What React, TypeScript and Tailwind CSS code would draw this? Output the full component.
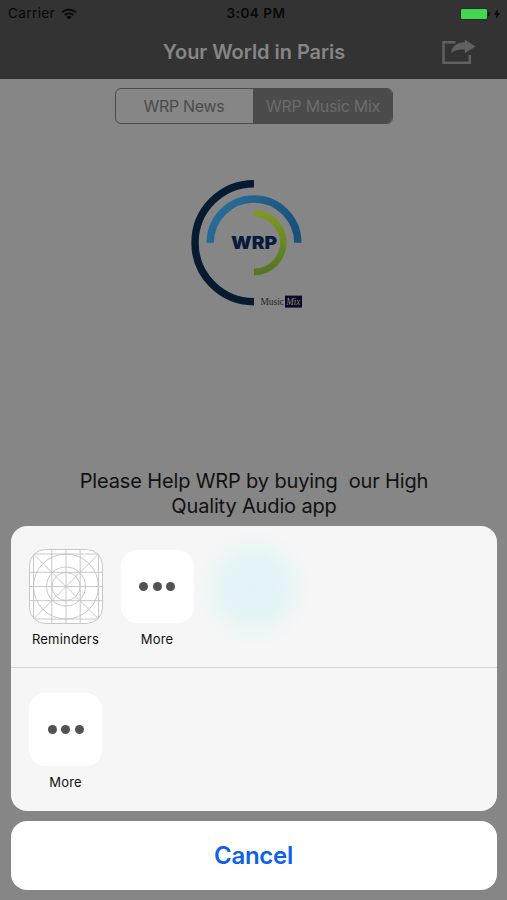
import React from "react";

const Wifi = () => (
  <svg width="16" height="12" viewBox="0 0 16 12" fill="none" stroke="#080808" strokeWidth="1.7">
    <path d="M1 4.4a10 10 0 0 1 14 0" />
    <path d="M3.6 7.1a6.3 6.3 0 0 1 8.8 0" />
    <path d="M8 11.5 5.4 8.9a3.8 3.8 0 0 1 5.2 0Z" fill="#080808" stroke="none" />
  </svg>
);

const StatusBar = () => (
  <div className="relative flex h-[27px] items-center justify-between pr-[6px] pl-[8px] text-[#080808]">
    <div className="flex items-center gap-[6px]">
      <span className="text-[13.5px] tracking-[0.4px]">Carrier</span>
      <Wifi />
    </div>
    <div className="absolute inset-x-0 pl-[5px] text-center text-[13.5px] font-semibold tracking-[0.5px]">
      3:04 PM
    </div>
    <div className="flex items-center">
      <div className="h-[12px] w-[28px] rounded-[2px] border border-[#262b27] bg-[#45d64f]" />
      <div className="h-1 w-[2px] rounded-r-sm bg-[#0c0c0c]" />
      <svg className="ml-[3px]" width="8" height="12" viewBox="0 0 8 12" fill="#080808">
        <path d="M5 .8.9 6.8h2.6L2.7 11.2 7.1 5H4.5Z" />
      </svg>
    </div>
  </div>
);

const ShareIcon = () => (
  <svg width="34" height="26" viewBox="0 0 34 26">
    <path d="M13.5 3.2H1.5v20.6h26.3V16" fill="none" stroke="#616161" strokeWidth="2.4" />
    <path d="M9 14C10.2 7.4 14.6 3.6 22.8 3.3V.4L33.6 7.5 22.8 14.3V10.6C17 10.1 13 11 9 14Z" fill="#616161" />
  </svg>
);

const Logo = () => (
  <svg width="135" height="145" viewBox="0 0 135 145">
    <defs>
      <linearGradient id="blue" x1="0" y1="0" x2="1" y2="0.4">
        <stop offset="0" stopColor="#2a729c" />
        <stop offset="1" stopColor="#19517d" />
      </linearGradient>
      <linearGradient id="green" x1="0" y1="0" x2="0" y2="1">
        <stop offset="0" stopColor="#7d9824" />
        <stop offset="1" stopColor="#567622" />
      </linearGradient>
    </defs>
    <g fill="none">
      <path d="M74 13.7a59 59 0 0 0 0 118" stroke="#061a30" strokeWidth="7.4" />
      <path d="M30.2 72.8a43.8 43.8 0 0 1 87.6 0" stroke="url(#blue)" strokeWidth="7.4" />
      <path d="M74 43.3a29.3 29.3 0 0 1 0 58.6" stroke="url(#green)" strokeWidth="6.6" />
    </g>
    <text x="51" y="79" textLength="46" lengthAdjust="spacingAndGlyphs" fontSize="17" fontWeight="900" fill="#0a1a3c">
      WRP
    </text>
    <g className="font-['Liberation_Serif',serif]" fontSize="10">
      <text x="80.5" y="135" textLength="23.5" lengthAdjust="spacingAndGlyphs" fill="#252525">
        Music
      </text>
      <rect x="105" y="125.6" width="17" height="12" fill="#090b24" />
      <text x="106.2" y="135" textLength="14" lengthAdjust="spacingAndGlyphs" fontStyle="italic" fill="#858585">
        Mix
      </text>
    </g>
  </svg>
);

// app icon construction grid
const GridIcon = () => (
  <svg width="74" height="75" viewBox="0 0 74 75" fill="none" stroke="#c2c2c2" strokeWidth="0.9">
    <defs>
      <clipPath id="tile">
        <rect x="0.5" y="0.5" width="73" height="74" rx="16" />
      </clipPath>
    </defs>
    <rect x="0.5" y="0.5" width="73" height="74" rx="16" fill="#fff" />
    <g clipPath="url(#tile)">
      <path d="M4.5 0v75M22.8 0v75M37 0v75M51.2 0v75M69.5 0v75" />
      <path d="M0 5h74M0 23.3h74M0 37.5h74M0 51.7h74M0 70h74" />
      <path d="M0 0.5 74 74.5M74 0.5 0 74.5" />
    </g>
    <circle cx="37" cy="37.5" r="32.5" />
    <circle cx="37" cy="37.5" r="19.5" />
    <circle cx="37" cy="37.5" r="14" />
  </svg>
);

const MoreIcon = () => (
  <div className="flex h-[73px] w-[73px] items-center justify-center gap-[4.5px] rounded-[16px] bg-white">
    <div className="h-[9px] w-[9px] rounded-full bg-[#525254]" />
    <div className="h-[9px] w-[9px] rounded-full bg-[#525254]" />
    <div className="h-[9px] w-[9px] rounded-full bg-[#525254]" />
  </div>
);

const ShareItem = ({ label, children }: { label: string; children: React.ReactNode }) => (
  <div className="flex w-[74px] flex-col items-center">
    <div className="flex h-[75px] items-center">{children}</div>
    <span className="mt-[6px] text-[13px] leading-[18px] tracking-[0.2px] text-[#111]">{label}</span>
  </div>
);

const App = () => {
  return (
    <div className="flex h-[900px] w-[507px] flex-col overflow-hidden bg-[#868686] font-['Inter','Liberation_Sans',sans-serif]">
      <header className="h-[79px] shrink-0 bg-[#333]">
        <StatusBar />
        <div className="grid h-[50px] grid-cols-[1fr_auto_1fr] items-center">
          <h1 className="col-start-2 pl-px text-[20px] font-semibold tracking-[-0.05px] text-[#868686]">
            Your World in Paris
          </h1>
          <div className="flex justify-end pr-[31px]">
            <ShareIcon />
          </div>
        </div>
      </header>

      <div className="mx-auto mt-[9px] flex h-[36px] w-[278px] shrink-0 overflow-hidden rounded-[6px] border border-[#4b4b4b] text-[16px]">
        <div className="flex flex-1 items-center justify-center tracking-[-0.3px] text-[#4b4b4b]">
          WRP News
        </div>
        <div className="flex flex-1 items-center justify-center bg-[#4b4b4b] pl-[2px] tracking-[-0.3px] text-[#6c6c6c]">
          WRP Music Mix
        </div>
      </div>

      <div className="mt-[46px] ml-[180px] shrink-0">
        <Logo />
      </div>

      <p className="mt-[154px] h-[57px] shrink-0 pl-px text-center text-[20px] leading-[24.5px] tracking-[-0.15px] whitespace-pre text-[#111]">
        {"Please Help WRP by buying  our High\nQuality Audio app"}
      </p>

      <div className="mr-[10px] ml-[11px] h-[285px] shrink-0 overflow-hidden rounded-[16px] bg-[#f6f6f6]">
        <div className="relative flex h-[142px] border-b border-[#d5d5d5] px-[17.5px] pt-[23px]">
          <div className="absolute top-[3px] left-[184px] h-[118px] w-[118px] rounded-full bg-[radial-gradient(closest-side,#e2f3f8_0%,#e5f4f5_50%,#eff6f6_78%,#f6f6f6_100%)]" />
          <div className="relative flex gap-[17.5px]">
            <ShareItem label="Reminders">
              <GridIcon />
            </ShareItem>
            <ShareItem label="More">
              <MoreIcon />
            </ShareItem>
          </div>
        </div>
        <div className="flex px-[17.5px] pt-[24px]">
          <ShareItem label="More">
            <MoreIcon />
          </ShareItem>
        </div>
      </div>

      <button className="mr-[10px] ml-[11px] mt-[10px] h-[69px] shrink-0 rounded-[16px] bg-white pr-px text-[24px] font-semibold tracking-[-0.3px] text-[#0b60ec]">
        Cancel
      </button>
    </div>
  );
};

export default App;
